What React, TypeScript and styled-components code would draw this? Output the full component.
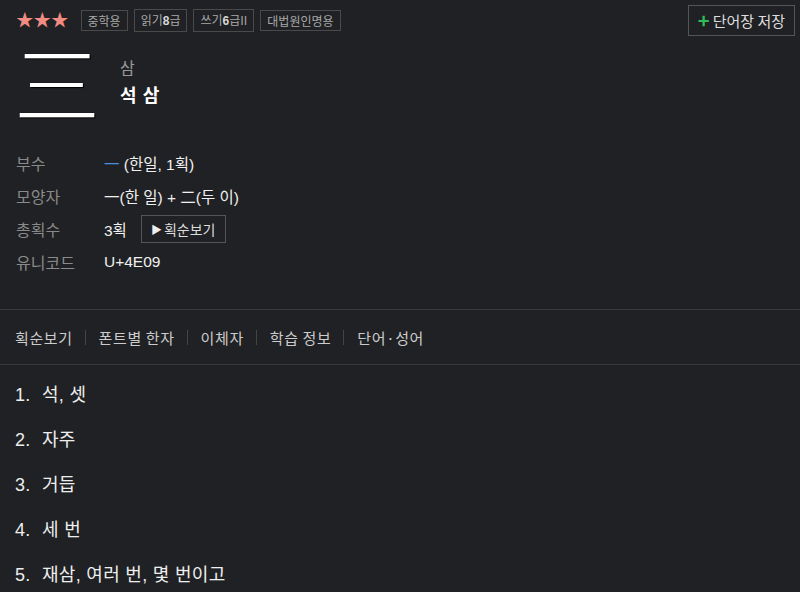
import React from "react";
import styled, { createGlobalStyle } from "styled-components";

const GlobalStyle = createGlobalStyle`
  html, body {
    margin: 0;
    padding: 0;
    background: #202124;
  }
  body {
    font-family: "Liberation Sans", "Noto Sans CJK KR", sans-serif;
    color: #e8e8e8;
  }
`;

const tags = [
  { text: "중학용" },
  { text: "읽기", strong: "8", rest: "급" },
  { text: "쓰기", strong: "6", rest: "급II" },
  { text: "대법원인명용" },
];

const meanings = ["석, 셋", "자주", "거듭", "세 번", "재삼, 여러 번, 몇 번이고"];

const tabs = ["획순보기", "폰트별 한자", "이체자", "학습 정보", "단어·성어"];

function App() {
  return (
    <Page>
      <GlobalStyle />
      <TopBar>
        <Stars>★★★</Stars>
        {tags.map((t) => (
          <Tag key={t.text}>
            {t.text}
            {t.strong && <TagStrong>{t.strong}</TagStrong>}
            {t.rest}
          </Tag>
        ))}
        <SaveButton>
          <Plus>+</Plus>단어장 저장
        </SaveButton>
      </TopBar>

      <Head>
        <BigHanja>三</BigHanja>
        <Reading>
          <Sound>삼</Sound>
          <Meaning>석 삼</Meaning>
        </Reading>
      </Head>

      <InfoTable>
        <Label>부수</Label>
        <Value>
          <Radical>一</Radical>&nbsp;(한일, 1획)
        </Value>
        <Label>모양자</Label>
        <Value>一(한 일) + 二(두 이)</Value>
        <Label>총획수</Label>
        <Value>
          3획
          <StrokeButton>
            <Tri>▶</Tri>획순보기
          </StrokeButton>
        </Value>
        <Label>유니코드</Label>
        <Value>U+4E09</Value>
      </InfoTable>

      <TabBar>
        {tabs.map((t, i) => (
          <React.Fragment key={t}>
            {i > 0 && <Sep />}
            <Tab>{t}</Tab>
          </React.Fragment>
        ))}
      </TabBar>

      <MeaningList>
        {meanings.map((m, i) => (
          <MeaningItem key={m}>
            <Num>{i + 1}.</Num>
            {m}
          </MeaningItem>
        ))}
      </MeaningList>
    </Page>
  );
}

const Page = styled.div`
  width: 800px;
  height: 592px;
  overflow: hidden;
  background: #202124;
`;

const TopBar = styled.div`
  display: flex;
  align-items: center;
  gap: 6px;
  padding: 5px 5px 0 16px;
  height: 30px;
`;

const Stars = styled.span`
  color: #f28b82;
  font-size: 17.5px;
  line-height: 20px;
  margin-right: 6px;
`;

const Tag = styled.span`
  border: 1px solid #4a4a4a;
  color: #a8a8a8;
  font-size: 12px;
  padding: 1px 6px;
  line-height: 17px;
  font-family: "Noto Sans CJK KR", sans-serif;
`;

const TagStrong = styled.b`
  color: #d8d8d8;
  font-family: "Liberation Sans", sans-serif;
`;

const SaveButton = styled.button`
  margin-left: auto;
  height: 31px;
  padding: 0 9px;
  background: #202124;
  border: 1px solid #555;
  color: #ddd;
  font-size: 15px;
  font-family: "Noto Sans CJK KR", sans-serif;
  display: flex;
  align-items: center;
  gap: 3px;
`;

const Plus = styled.span`
  color: #2ebd59;
  font-size: 20px;
  font-weight: bold;
  line-height: 1;
`;

const Head = styled.div`
  display: flex;
  align-items: center;
  padding: 1px 0 0 14px;
  height: 90px;
`;

const BigHanja = styled.div`
  font-family: "Noto Sans CJK SC", sans-serif;
  font-weight: 300;
  font-size: 86px;
  line-height: 86px;
  color: #fff;
  text-shadow: 0 0 1px #000, 1px 1px 1px #000;
  width: 106px;
`;

const Reading = styled.div`
  display: flex;
  flex-direction: column;
  gap: 6px;
  font-family: "Noto Sans CJK KR", sans-serif;
`;

const Sound = styled.div`
  color: #9a9a9a;
  font-size: 16px;
  line-height: 20px;
`;

const Meaning = styled.div`
  color: #fff;
  font-size: 18px;
  font-weight: bold;
  line-height: 22px;
  word-spacing: 2px;
`;

const InfoTable = styled.div`
  display: grid;
  grid-template-columns: 88px 1fr;
  grid-auto-rows: 33px;
  align-items: center;
  padding: 20px 16px 31px;
  border-bottom: 1px solid #3a3a3c;
`;

const Label = styled.div`
  color: #8a8a8a;
  font-size: 16px;
  font-family: "Noto Sans CJK KR", sans-serif;
`;

const Value = styled.div`
  color: #f0f0f0;
  font-size: 15.5px;
  display: flex;
  align-items: center;
`;

const Radical = styled.span`
  color: #4a8fe0;
`;

const StrokeButton = styled.span`
  margin-left: 14px;
  border: 1px solid #555;
  height: 26px;
  padding: 0 10px 0 9px;
  display: inline-flex;
  align-items: center;
  color: #ddd;
  font-size: 14px;
  font-family: "Noto Sans CJK KR", sans-serif;
`;

const Tri = styled.span`
  font-size: 11px;
  margin-right: 2px;
  color: #eee;
`;

const TabBar = styled.div`
  display: flex;
  align-items: center;
  height: 54px;
  padding-left: 15px;
  border-bottom: 1px solid #3a3a3c;
`;

const Tab = styled.span`
  color: #cccccc;
  font-size: 15px;
  letter-spacing: 0.6px;
  font-family: "Noto Sans CJK KR", sans-serif;
`;

const Sep = styled.span`
  width: 1px;
  height: 15px;
  background: #444;
  margin: 0 13px 0 12px;
`;

const MeaningList = styled.ol`
  list-style: none;
  margin: 0;
  padding: 8px 0 0 15px;
`;

const MeaningItem = styled.li`
  height: 45px;
  line-height: 45px;
  font-size: 18px;
  letter-spacing: 0.3px;
  color: #eee;
  font-family: "Liberation Sans", "Noto Sans CJK KR", sans-serif;
`;

const Num = styled.span`
  display: inline-block;
  width: 27px;
`;

export default App;
